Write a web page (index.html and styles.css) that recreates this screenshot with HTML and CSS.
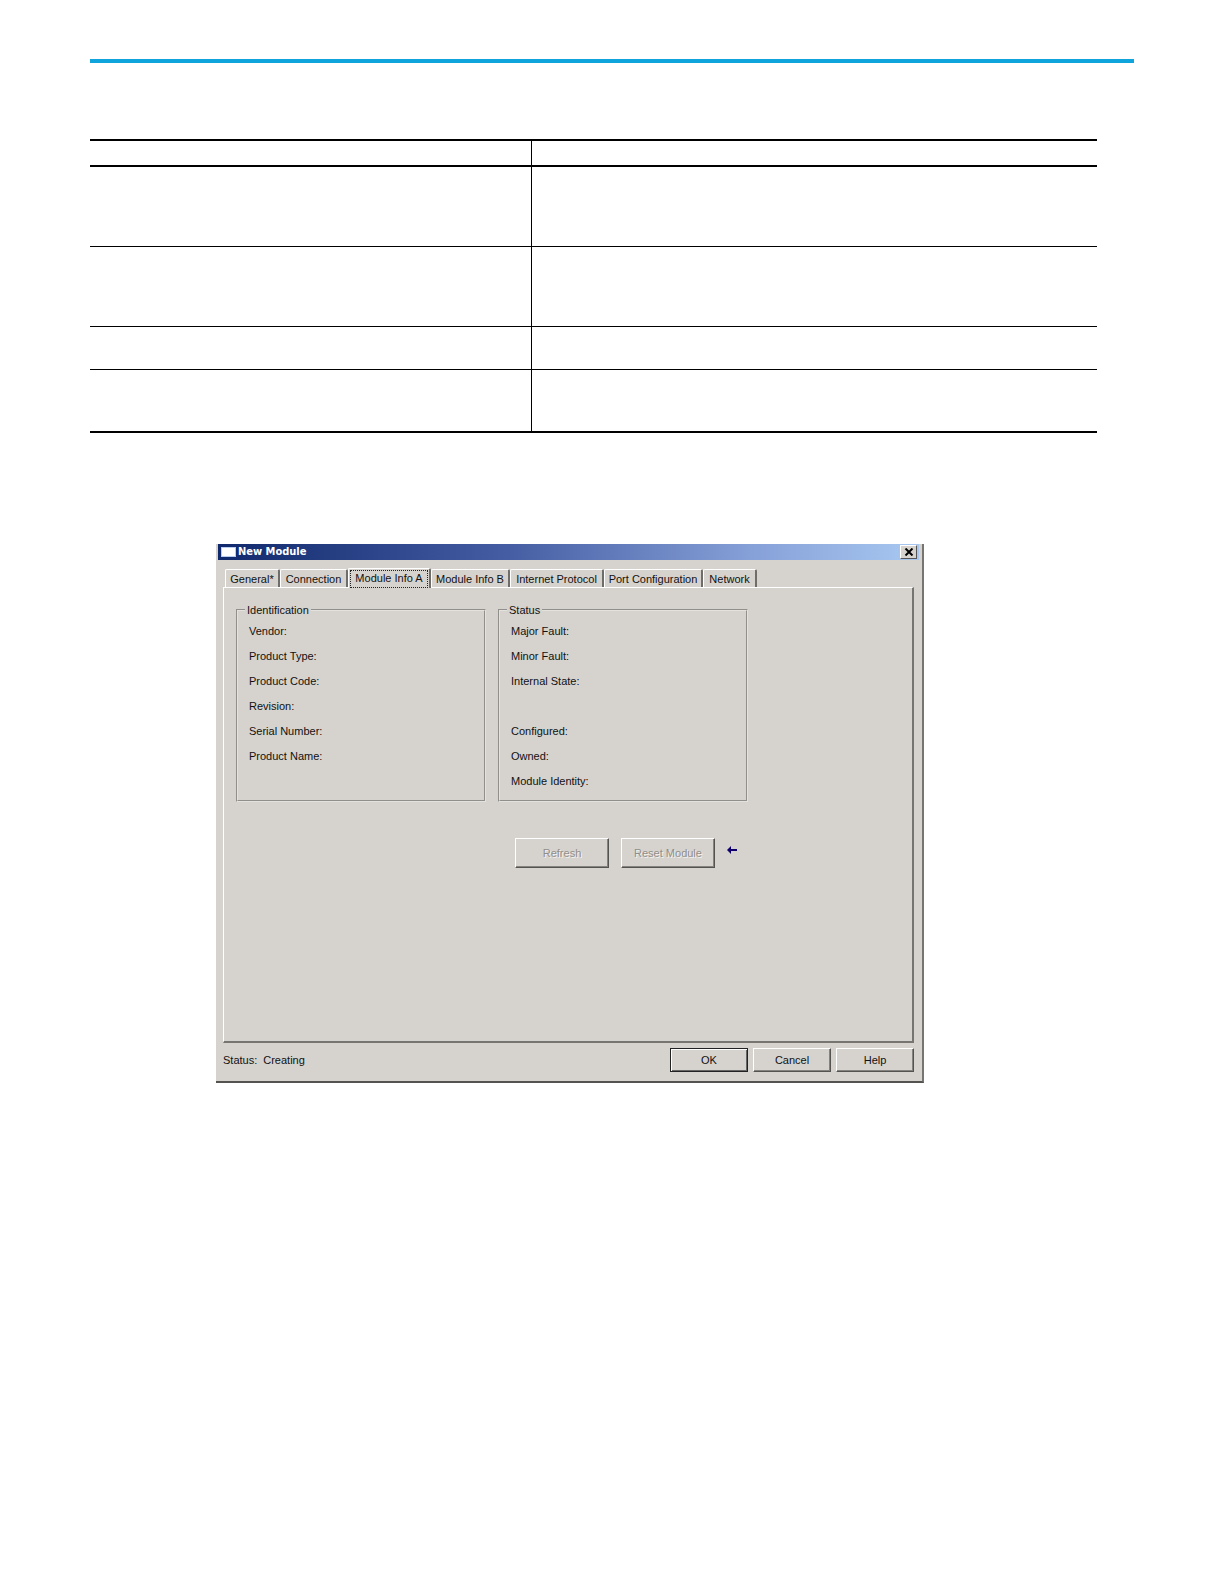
FILE: index.html
```
<!DOCTYPE html>
<html lang="en">
<head>
<meta charset="utf-8">
<title>New Module</title>
<link rel="stylesheet" href="styles.css">
</head>
<body>
<main class="page">
  <hr class="page-rule">

  <table class="spec-table">
    <colgroup><col class="spec-name"><col></colgroup>
    <thead>
      <tr class="row-head"><th></th><th></th></tr>
    </thead>
    <tbody>
      <tr class="row-tall"><td></td><td></td></tr>
      <tr class="row-tall"><td></td><td></td></tr>
      <tr class="row-short"><td></td><td></td></tr>
      <tr class="row-medium"><td></td><td></td></tr>
    </tbody>
  </table>

  <section class="dialog" role="dialog" aria-labelledby="dialog-title">
    <header class="title-bar">
      <span class="title-icon"></span>
      <h1 class="title-text" id="dialog-title">New Module</h1>
      <button class="close" type="button" aria-label="Close">
        <svg width="10" height="8" viewBox="0 0 10 8" aria-hidden="true"><path d="M1.5 0.5 8.5 7.5M8.5 0.5 1.5 7.5" stroke="#000" stroke-width="2" fill="none"/></svg>
      </button>
    </header>

    <div class="tabs" role="tablist">
      <button class="tab" type="button" role="tab">General*</button>
      <button class="tab" type="button" role="tab">Connection</button>
      <button class="tab tab-selected" type="button" role="tab" aria-selected="true"><span class="tab-focus">Module Info A</span></button>
      <button class="tab" type="button" role="tab">Module Info B</button>
      <button class="tab" type="button" role="tab">Internet Protocol</button>
      <button class="tab" type="button" role="tab">Port Configuration</button>
      <button class="tab" type="button" role="tab">Network</button>
    </div>

    <div class="panel" role="tabpanel">
      <div class="groups">
        <fieldset class="group">
          <legend>Identification</legend>
          <ul class="fields">
            <li>Vendor:</li>
            <li>Product Type:</li>
            <li>Product Code:</li>
            <li>Revision:</li>
            <li>Serial Number:</li>
            <li>Product Name:</li>
          </ul>
        </fieldset>
        <fieldset class="group">
          <legend>Status</legend>
          <ul class="fields">
            <li>Major Fault:</li>
            <li>Minor Fault:</li>
            <li>Internal State:</li>
            <li class="field-gap">Configured:</li>
            <li>Owned:</li>
            <li>Module Identity:</li>
          </ul>
        </fieldset>
      </div>
      <div class="actions">
        <button class="button button-large" type="button" disabled>Refresh</button>
        <button class="button button-large" type="button" disabled>Reset Module</button>
        <svg class="arrow" width="10" height="8" viewBox="0 0 10 8" aria-hidden="true"><path d="M0 4 4 0V3H10V5H4V8Z" fill="#10006e"/></svg>
      </div>
    </div>

    <footer class="footer">
      <p class="status"><span>Status:</span><span>Creating</span></p>
      <button class="button button-default" type="button">OK</button>
      <button class="button" type="button">Cancel</button>
      <button class="button" type="button">Help</button>
    </footer>
  </section>
</main>
</body>
</html>
```

FILE: styles.css
```
* {
  box-sizing: border-box;
}

body {
  margin: 0;
  background: #fff;
  color: #111;
  font: 11px/16px "Liberation Sans", Arial, sans-serif;
}

button {
  font: inherit;
  color: inherit;
  padding: 0;
}

.page {
  padding: 59px 90px;
}

.page-rule {
  height: 4px;
  margin: 0 0 76px;
  border: 0;
  background: #0fa5dc;
}

/* Specification table */
.spec-table {
  width: calc(100% - 37px);
  border-collapse: separate;
  border-spacing: 0;
  border-top: 2px solid #000;
  table-layout: fixed;
}

.spec-name {
  width: 442px;
}

.spec-table th,
.spec-table td {
  padding: 0;
  border-bottom: 1px solid #000;
}

.spec-table th {
  border-bottom-width: 2px;
}

.spec-table th:first-child,
.spec-table td:first-child {
  border-right: 1px solid #000;
}

.spec-table tr:last-child td {
  border-bottom-width: 2px;
}

.row-head {
  height: 26px;
}

.row-tall {
  height: 80px;
}

.row-short {
  height: 43px;
}

.row-medium {
  height: 63px;
}

/* Dialog window */
.dialog {
  margin: 111px 210px 0 126px;
  padding: 0 8px 9px 7px;
  border-right: 2px solid #777572;
  border-bottom: 2px solid #555350;
  background: #d6d3ce;
}

.title-bar {
  display: flex;
  align-items: center;
  height: 16px;
  margin: 0 -5px;
  padding: 0 2px 0 3px;
  background: linear-gradient(90deg, #10286c, #465fa4 42%, #86a0d8 76%, #a8c8f0);
}

.title-icon {
  width: 15px;
  height: 10px;
  margin-right: 2px;
  border: 1px solid #b9cdf0;
  background: #fff;
}

.title-text {
  margin: 0;
  color: #fff;
  font: bold 11px/14px "DejaVu Sans Condensed", "Noto Sans", sans-serif;
}

.close {
  display: grid;
  place-items: center;
  width: 17px;
  height: 14px;
  margin-left: auto;
  border: 1px solid;
  border-color: #fff #555 #555 #fff;
  background: #d6d3ce;
}

.tabs {
  display: grid;
  grid-template-columns: 55px 68px 83px 79px 94px 99px 54px;
  align-items: end;
  height: 27px;
  padding-left: 2px;
}

.tab {
  height: 18px;
  border: 0;
  border-top: 1px solid #fff;
  border-left: 1px solid #fff;
  border-right: 2px solid #6f6d6a;
  border-radius: 2px 2px 0 0;
  background: #d6d3ce;
  white-space: nowrap;
}

.tab-selected {
  height: 20px;
  margin-bottom: -1px;
  padding: 0 1px;
}

.tab-focus {
  display: block;
  height: 18px;
  border: 1px dotted #222;
  line-height: 14px;
}

.panel {
  min-height: 456px;
  padding: 14px 12px;
  border: 1px solid #fff;
  border-right: 2px solid #777572;
  border-bottom: 2px solid #777572;
}

.groups {
  display: flex;
  gap: 12px;
}

.group {
  width: 250px;
  height: 200px;
  min-width: 0;
  margin: 0;
  padding: 0 11px;
  border: 2px groove #e4e2de;
}

.group legend {
  margin-left: -4px;
  padding: 0 2px;
}

.fields {
  display: grid;
  gap: 9px;
  margin: 5px 0 0;
  padding: 0;
  list-style: none;
}

.field-gap {
  margin-top: 25px;
}

.actions {
  display: flex;
  gap: 12px;
  margin: 36px 0 0 279px;
}

.arrow {
  margin-top: 8px;
}

.button {
  width: 78px;
  height: 24px;
  border: 1px solid;
  border-color: #fff #555350 #555350 #fff;
  background: #d6d3ce;
  box-shadow: inset -1px -1px #858380;
}

.button-large {
  width: 94px;
  height: 30px;
}

.button:disabled {
  color: #908e8a;
  text-shadow: 1px 1px #f4f2ef;
}

.button-default {
  border-color: #222;
  box-shadow: inset 1px 1px #fff, inset -1px -1px #666;
}

.footer {
  display: flex;
  gap: 5px;
  align-items: center;
  margin-top: 5px;
}

.status {
  display: flex;
  gap: 6px;
  flex: 1;
  margin: 0;
}
```
